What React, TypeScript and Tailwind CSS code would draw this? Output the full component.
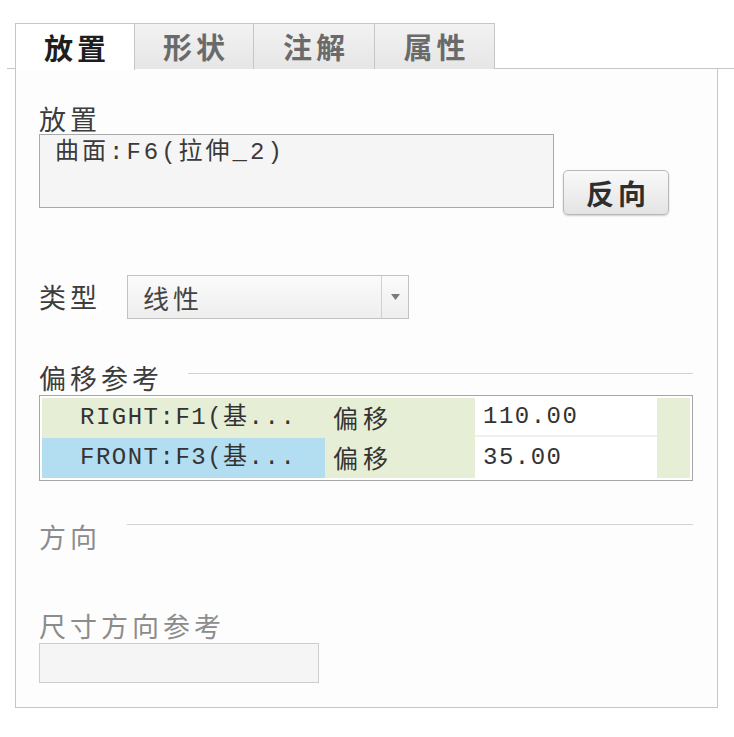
const cjk = "font-['Noto_Sans_CJK_SC',sans-serif]";
const mono = "font-['Liberation_Mono','Noto_Sans_CJK_SC',monospace]";

const tabs = ["放置", "形状", "注解", "属性"];
const tabWidths = ["w-[120px]", "w-[119px]", "w-[121px]", "w-[120px]"];

function SectionHeader({ label, muted, lineOffset }: { label: string; muted?: boolean; lineOffset: string }) {
  return (
    <div className="flex items-start h-[30px]">
      <span
        className={`text-[27px] leading-[30px] tracking-[4px] whitespace-nowrap ${
          muted ? "text-[#8c8c8c]" : "text-[#3c3c3c]"
        }`}
      >
        {label}
      </span>
      <div className={`flex-1 h-px bg-[#d2d2d2] ${lineOffset}`} />
    </div>
  );
}

export default function App() {
  return (
    <div className={`w-[734px] h-[737px] bg-white pt-[23px] ${cjk}`}>
      {/* tab strip */}
      <div className="ml-[7px] pl-[8px] flex border-b border-[#c6c6c6] h-[46px]">
        {tabs.map((t, i) => (
          <div
            key={t}
            className={`${tabWidths[i]} h-[46px] flex items-center justify-center border-t border-r border-[#c6c6c6] ${
              i === 0
                ? "border-l bg-white text-[#1e1e1e] h-[47px] relative z-10"
                : "bg-gradient-to-b from-[#f2f2f2] to-[#e6e6e6] text-[#6a6a6a]"
            }`}
          >
            <span className="text-[29px] leading-none font-bold tracking-[4px] pl-[4px]">{t}</span>
          </div>
        ))}
      </div>

      {/* panel */}
      <div className="ml-[15px] w-[703px] h-[639px] border-x border-b border-[#c6c6c6] bg-[#fdfdfd] pl-[23px] pr-[24px]">
        <div className="pt-[35px] text-[27px] leading-[30px] tracking-[4px] text-[#3c3c3c]">放置</div>

        <div className="flex items-start">
          <div className="w-[515px] h-[74px] border border-[#a9a9a9] bg-[#f6f5f6] pl-[15px] pt-[4px]">
            <span className={`${mono} text-[24px] leading-[28px] tracking-[3px] text-[#3a3a3a]`}>
              曲面:F6(拉伸_2)
            </span>
          </div>
          <button className="ml-[9px] mt-[36px] w-[106px] h-[45px] rounded-[5px] border border-[#b9b9b9] bg-gradient-to-b from-[#f9f9f9] to-[#e4e4e4] shadow-[0_1px_2px_rgba(0,0,0,0.2)] text-[28px] leading-none font-bold tracking-[4px] pl-[4px] text-[#2e2e2e]">
            反向
          </button>
        </div>

        {/* type select */}
        <div className="flex items-center mt-[60px] h-[44px]">
          <span className="text-[27px] leading-[30px] tracking-[4px] text-[#3c3c3c] w-[88px]">类型</span>
          <div className="w-[282px] h-[44px] flex border border-[#c2c2c2] bg-gradient-to-b from-[#fbfbfb] to-[#eeeeee]">
            <div className="flex-1 flex items-center pl-[15px] text-[26px] tracking-[4px] text-[#444]">线性</div>
            <div className="w-[27px] border-l border-[#d0d0d0] flex items-center justify-center">
              <svg width="9" height="6" viewBox="0 0 9 6">
                <path d="M0 0 L9 0 L4.5 6 Z" fill="#7a7a7a" />
              </svg>
            </div>
          </div>
        </div>

        {/* offset references */}
        <div className="mt-[44px]">
          <SectionHeader label="偏移参考" lineOffset="ml-[25px] mt-[10px]" />
        </div>
        <div className="mt-[2px] h-[86px] border border-[#a6a6a6] bg-white p-[2px]">
          <div className="flex h-full">
            <div className="w-[283px] flex flex-col">
              <div className={`h-[40px] bg-[#e6eed6] pl-[38px] flex items-center ${mono} text-[24px] tracking-[1.5px] text-[#333]`}>
                RIGHT:F1(基...
              </div>
              <div className={`h-[40px] bg-[#b3def1] pl-[38px] flex items-center ${mono} text-[24px] tracking-[1.5px] text-[#333]`}>
                FRONT:F3(基...
              </div>
            </div>
            <div className="w-[150px] flex flex-col bg-[#e6eed6]">
              <div className="h-[40px] pl-[8px] flex items-center text-[25px] tracking-[5px] text-[#333]">偏移</div>
              <div className="h-[40px] pl-[8px] flex items-center text-[25px] tracking-[5px] text-[#333]">偏移</div>
            </div>
            <div className="w-[182px] flex flex-col bg-white">
              <div className={`h-[39px] border-b-2 border-[#eef1ea] pl-[8px] flex items-center ${mono} text-[24px] tracking-[1.5px] text-[#333]`}>
                110.00
              </div>
              <div className={`h-[41px] pl-[8px] flex items-center ${mono} text-[24px] tracking-[1.5px] text-[#333]`}>
                35.00
              </div>
            </div>
            <div className="flex-1 bg-[#e6eed6]" />
          </div>
        </div>

        {/* direction */}
        <div className="mt-[41px]">
          <SectionHeader label="方向" muted lineOffset="ml-[26px] mt-[2px]" />
        </div>

        <div className="mt-[59px] text-[27px] leading-[30px] tracking-[4px] text-[#8c8c8c]">尺寸方向参考</div>
        <div className="mt-[2px] w-[280px] h-[40px] border border-[#cdcdcd] bg-[#f5f5f5]" />
      </div>
    </div>
  );
}
